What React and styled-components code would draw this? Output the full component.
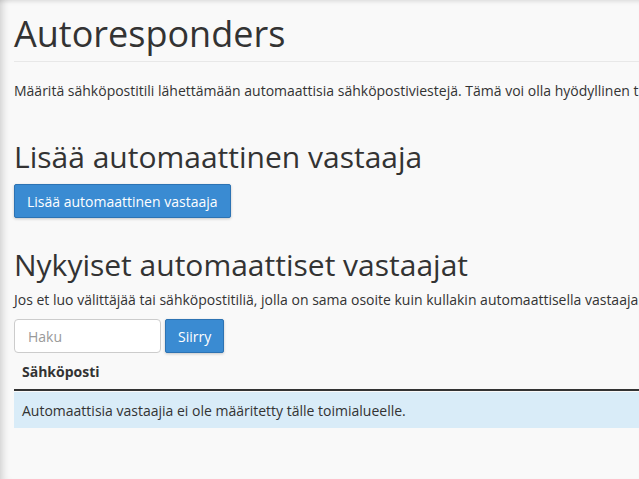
import React from "react";
import styled, { createGlobalStyle } from "styled-components";

const GlobalStyle = createGlobalStyle`
  html, body {
    margin: 0;
    padding: 0;
    background: #f9f9f9;
    overflow: hidden;
  }
  body {
    font-family: "Open Sans", "Noto Sans", sans-serif;
    color: #333;
  }
`;

const Viewport = styled.div`
  position: relative;
  width: 639px;
  height: 479px;
  overflow: hidden;
  background: #f9f9f9;
  box-shadow: inset 9px 0 8px -7px rgba(0, 0, 0, 0.18),
    inset 0 5px 5px -4px rgba(0, 0, 0, 0.14);
`;

const Content = styled.div`
  width: 1000px;
  padding: 0 0 0 14px;
`;

const PageTitle = styled.h1`
  margin: 0;
  padding-top: 11px;
  font-size: 36px;
  font-weight: 400;
  line-height: 46px;
  color: #333;
  border-bottom: 1px solid #e8e8e8;
  padding-bottom: 4px;
`;

const Lead = styled.p`
  margin: ${(p) => p.$top || "19px"} 0 0;
  font-size: 14px;
  line-height: 20px;
  white-space: nowrap;
`;

const SectionTitle = styled.h2`
  margin: ${(p) => p.$top || "37px"} 0 0;
  font-size: 30px;
  font-weight: 400;
  line-height: 38px;
  color: #333;
`;

const PrimaryButton = styled.button`
  display: inline-flex;
  align-items: center;
  height: 34px;
  padding: 0 12px;
  font-family: inherit;
  font-size: 14px;
  color: #fff;
  background: #3a8bd2;
  border: 1px solid #2d73b3;
  border-radius: 2px;
  box-shadow: 0 1px 3px rgba(0, 0, 0, 0.2);
`;

const ButtonRow = styled.div`
  margin-top: ${(p) => p.$top || "8px"};
  display: flex;
  gap: 4px;
`;

const SearchInput = styled.input`
  width: 147px;
  height: 34px;
  box-sizing: border-box;
  padding: 0 13px;
  font-family: inherit;
  font-size: 14px;
  color: #333;
  background: #fff;
  border: 1px solid #ccc;
  border-radius: 4px;
  &::placeholder {
    color: #999;
  }
`;

const Table = styled.div`
  margin-top: 0;
`;

const TableHead = styled.div`
  height: 36px;
  display: flex;
  align-items: center;
  padding-left: 8px;
  font-size: 14px;
  font-weight: 700;
  border-bottom: 2px solid #333;
`;

const InfoRow = styled.div`
  height: 36px;
  display: flex;
  align-items: center;
  padding-left: 8px;
  font-size: 14px;
  background: #d9ecf8;
  margin-top: 1px;
`;

export default function App() {
  return (
    <>
      <GlobalStyle />
      <Viewport>
        <Content>
          <PageTitle>Autoresponders</PageTitle>
          <Lead>
            Määritä sähköpostitili lähettämään automaattisia sähköpostiviestejä. Tämä voi olla hyödyllinen
            tilanteissa, joissa olet lomalla.
          </Lead>
          <SectionTitle>Lisää automaattinen vastaaja</SectionTitle>
          <ButtonRow>
            <PrimaryButton>Lisää automaattinen vastaaja</PrimaryButton>
          </ButtonRow>
          <SectionTitle $top="28px">Nykyiset automaattiset vastaajat</SectionTitle>
          <Lead $top="6px">
            Jos et luo välittäjää tai sähköpostitiliä, jolla on sama osoite kuin kullakin automaattisella vastaajalla,
            vastaukset eivät toimi.
          </Lead>
          <ButtonRow $top="9px">
            <SearchInput placeholder="Haku" />
            <PrimaryButton>Siirry</PrimaryButton>
          </ButtonRow>
          <Table>
            <TableHead>Sähköposti</TableHead>
            <InfoRow>Automaattisia vastaajia ei ole määritetty tälle toimialueelle.</InfoRow>
          </Table>
        </Content>
      </Viewport>
    </>
  );
}
